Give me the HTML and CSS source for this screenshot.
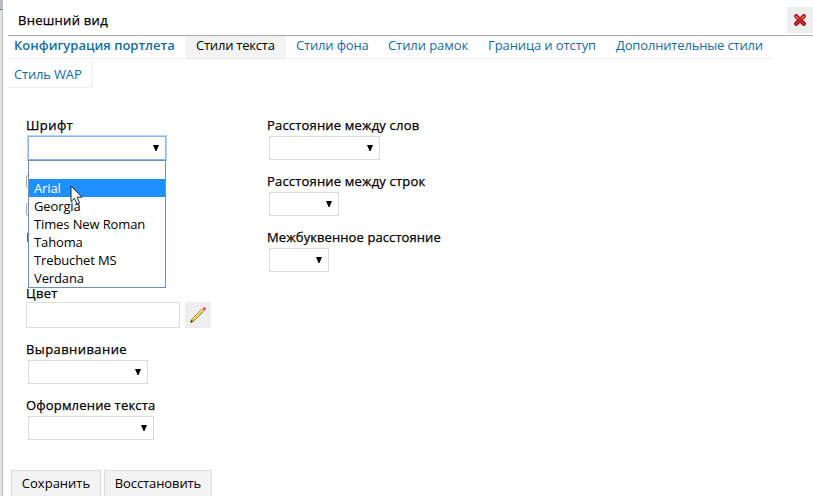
FILE: index.html
```html
<!DOCTYPE html>
<html lang="ru">
<head>
<meta charset="utf-8">
<title>Внешний вид</title>
<link rel="stylesheet" href="styles.css">
</head>
<body>
<div class="backdrop"></div>
<main class="dialog">
  <header class="header">
    <h1 class="title">Внешний вид</h1>
    <button class="close" type="button" aria-label="Закрыть">
      <svg width="12" height="12" viewBox="0 0 12 12"><path d="M2.2 2.2 9.8 9.8M9.8 2.2 2.2 9.8" stroke="#a31216" stroke-width="4.2" stroke-linecap="round"/><path d="M2.3 2.2 9.6 9.6M9.6 2.2 2.3 9.6" stroke="#c32023" stroke-width="2.6" stroke-linecap="round"/><path d="M1.8 2.4 4 4.4M10 2.4 8 4.3" stroke="#e77b7b" stroke-width="1.4" stroke-linecap="round"/></svg>
    </button>
  </header>
  <nav class="tabs">
    <a class="tab tab-config">Конфигурация портлета</a>
    <a class="tab tab-text">Стили текста</a>
    <a class="tab tab-back">Стили фона</a>
    <a class="tab tab-frame">Стили рамок</a>
    <a class="tab tab-margin">Граница и отступ</a>
    <a class="tab tab-extra">Дополнительные стили</a>
  </nav>
  <nav class="tabs tabs-second"><a class="tab tab-wap">Стиль WAP</a></nav>
  <form class="form">
    <div class="column column-left">
      <div class="field">
        <label class="label-wide">Шрифт</label>
        <div class="select select-open w-font"><i class="arrow"></i>
          <ul class="menu">
            <li></li><li class="selected">Arial</li><li>Georgia</li><li>Times New Roman</li><li>Tahoma</li><li>Trebuchet MS</li><li>Verdana</li>
          </ul>
          <svg class="cursor" width="13" height="21" viewBox="0 0 13 21"><path d="M1 1V16.5L4.5 13.2 7 19.2 9.6 18 7.2 12.2H12Z" fill="#fff" stroke="#182338" stroke-width="1"/></svg>
        </div>
      </div>
      <div class="field check-field"><span class="check"></span></div>
      <div class="field check-field"><span class="check"></span></div>
      <div class="field"><span class="label-edge"></span></div>
      <div class="field">
        <label class="color-label">Цвет</label>
        <div class="color-row"><span class="input"></span>
          <button class="pick" type="button" aria-label="Выбрать цвет"><svg width="18" height="18" viewBox="0 0 18 18"><path d="M1.8 16.2 3 13 13 3 15 5 5 14.9Z" fill="#e5cf43" stroke="#8a7a2c" stroke-width=".8"/><path d="M4 13.1 13.2 3.9" stroke="#fff3a0" stroke-width=".8"/><path d="M12.3 3.7 13.3 2.7 15.4 4.7 14.4 5.7Z" fill="#c8ced2"/><path d="M13.3 2.7Q15 .7 16.5 1.7T15.4 4.7Z" fill="#e8505a"/><path d="M1.3 16.8 2.3 14 4.2 15.8Z" fill="#222"/></svg></button>
        </div>
      </div>
      <div class="field"><label class="label-wide">Выравнивание</label><div class="select w-align"><i class="arrow"></i></div></div>
      <div class="field"><label>Оформление текста</label><div class="select w-decor"><i class="arrow"></i></div></div>
    </div>
    <div class="column">
      <div class="field"><label>Расстояние между слов</label><div class="select w-word"><i class="arrow"></i></div></div>
      <div class="field"><label>Расстояние между строк</label><div class="select w-line"><i class="arrow"></i></div></div>
      <div class="field"><label class="label-letter">Межбуквенное расстояние</label><div class="select w-letter"><i class="arrow"></i></div></div>
    </div>
  </form>
  <footer class="actions"><button class="action save" type="button">Сохранить</button><button class="action restore" type="button">Восстановить</button></footer>
</main>
</body>
</html>
```
FILE: styles.css
```css
* { box-sizing: border-box; }
body { margin: 0; width: 813px; height: 496px; overflow: hidden; display: flex; background: #fff; color: #000; font: 13px/18px "Open Sans", sans-serif; }
button { font: inherit; color: inherit; padding: 0; }
.backdrop { width: 3px; flex: none; background: linear-gradient(#b8bec9 0 9px, #6d6f75 9px 10px, #e3e3e5 10px); border-right: 1px solid #bdbdbf; }
.dialog { flex: 1; padding-left: 5px; min-width: 0; }
.header { height: 36px; display: flex; justify-content: space-between; align-items: flex-start; border-bottom: 1px solid #a4a9ac; padding: 7px 0 0 10px; }
.title, label { font-size: 13px; font-weight: 500; line-height: 18px; letter-spacing: .18px; -webkit-text-stroke: .25px #000; }
.title { margin: 4px 0 0; letter-spacing: .28px; }
.close, .pick { width: 26px; height: 26px; border: 0; background: #eee; display: flex; align-items: center; justify-content: center; }
.tabs { display: flex; width: 765px; height: 23px; border-bottom: 1px solid #ededed; }
.tab { color: #176c9f; line-height: 18px; padding-left: 10px; white-space: nowrap; flex: none; letter-spacing: -.17px; }
.tab-config { width: 177px; padding-left: 6px; font-weight: 600; letter-spacing: 0; }
.tab-text { width: 101px; padding-left: 11px; color: #000; background: #f3f3f3; letter-spacing: -.22px; }
.tab-back { width: 92px; }
.tab-frame { width: 100px; letter-spacing: -.08px; }
.tab-margin { width: 128px; letter-spacing: -.1px; }
.tab-extra { width: 167px; }
.tabs-second { width: 85px; height: 29px; border-right: 1px solid #ededed; }
.tab-wap { padding: 6px 0 0 6px; }
.form { display: flex; padding: 28px 0 0 18px; height: 382px; }
.column-left { width: 241px; }
.field { height: 56px; display: flex; flex-direction: column; align-items: flex-start; }
label { display: block; white-space: nowrap; height: 20px; }
.label-letter { letter-spacing: .09px; }
.label-wide { letter-spacing: .42px; }
.color-label { height: 18px; letter-spacing: .3px; }
.select { position: relative; height: 24px; margin-left: 2px; border: 1px solid #dcdcdc; background: #fff; display: flex; align-items: center; justify-content: flex-end; padding-right: 6px; }
.select-open { border: 1px solid #8eb1ed; box-shadow: 0 0 0 1px #bcd2f6; z-index: 2; }
.arrow { width: 6px; height: 6px; background: #000; clip-path: polygon(0 0, 100% 0, 58% 100%, 42% 100%); }
.w-font { width: 138px; } .w-align { width: 120px; } .w-decor { width: 126px; }
.w-word { width: 111px; } .w-line { width: 70px; } .w-letter { width: 60px; }
.menu { position: absolute; z-index: 3; left: -1px; top: 23px; width: 138px; height: 128px; margin: 0; padding: 0; list-style: none; border: 1px solid #6c8eb9; background: #fff; letter-spacing: -.12px; }
.menu li { height: 18px; padding-left: 5px; line-height: 18px; }
.menu .selected { background: #1e90ff; color: #fff; }
.cursor { position: absolute; z-index: 4; left: 41px; top: 48px; }
.check { width: 13px; height: 13px; margin-top: 3px; border: 1px solid #aaa; border-radius: 2px; }
.check-field { height: 28px; }
.label-edge { width: 2px; height: 9px; margin-top: 5px; margin-left: 1px; background: #8a5a28; }
.color-row { display: flex; gap: 5px; }
.input { width: 154px; height: 26px; border: 1px solid #dcdcdc; }
.actions { display: flex; gap: 3px; padding-left: 3px; }
.action { height: 27px; padding-bottom: 2px; border: 1px solid #e2d9da; background: #f3f3f3; white-space: nowrap; }
.save { width: 90px; } .restore { width: 108px; letter-spacing: -.1px; }
```
